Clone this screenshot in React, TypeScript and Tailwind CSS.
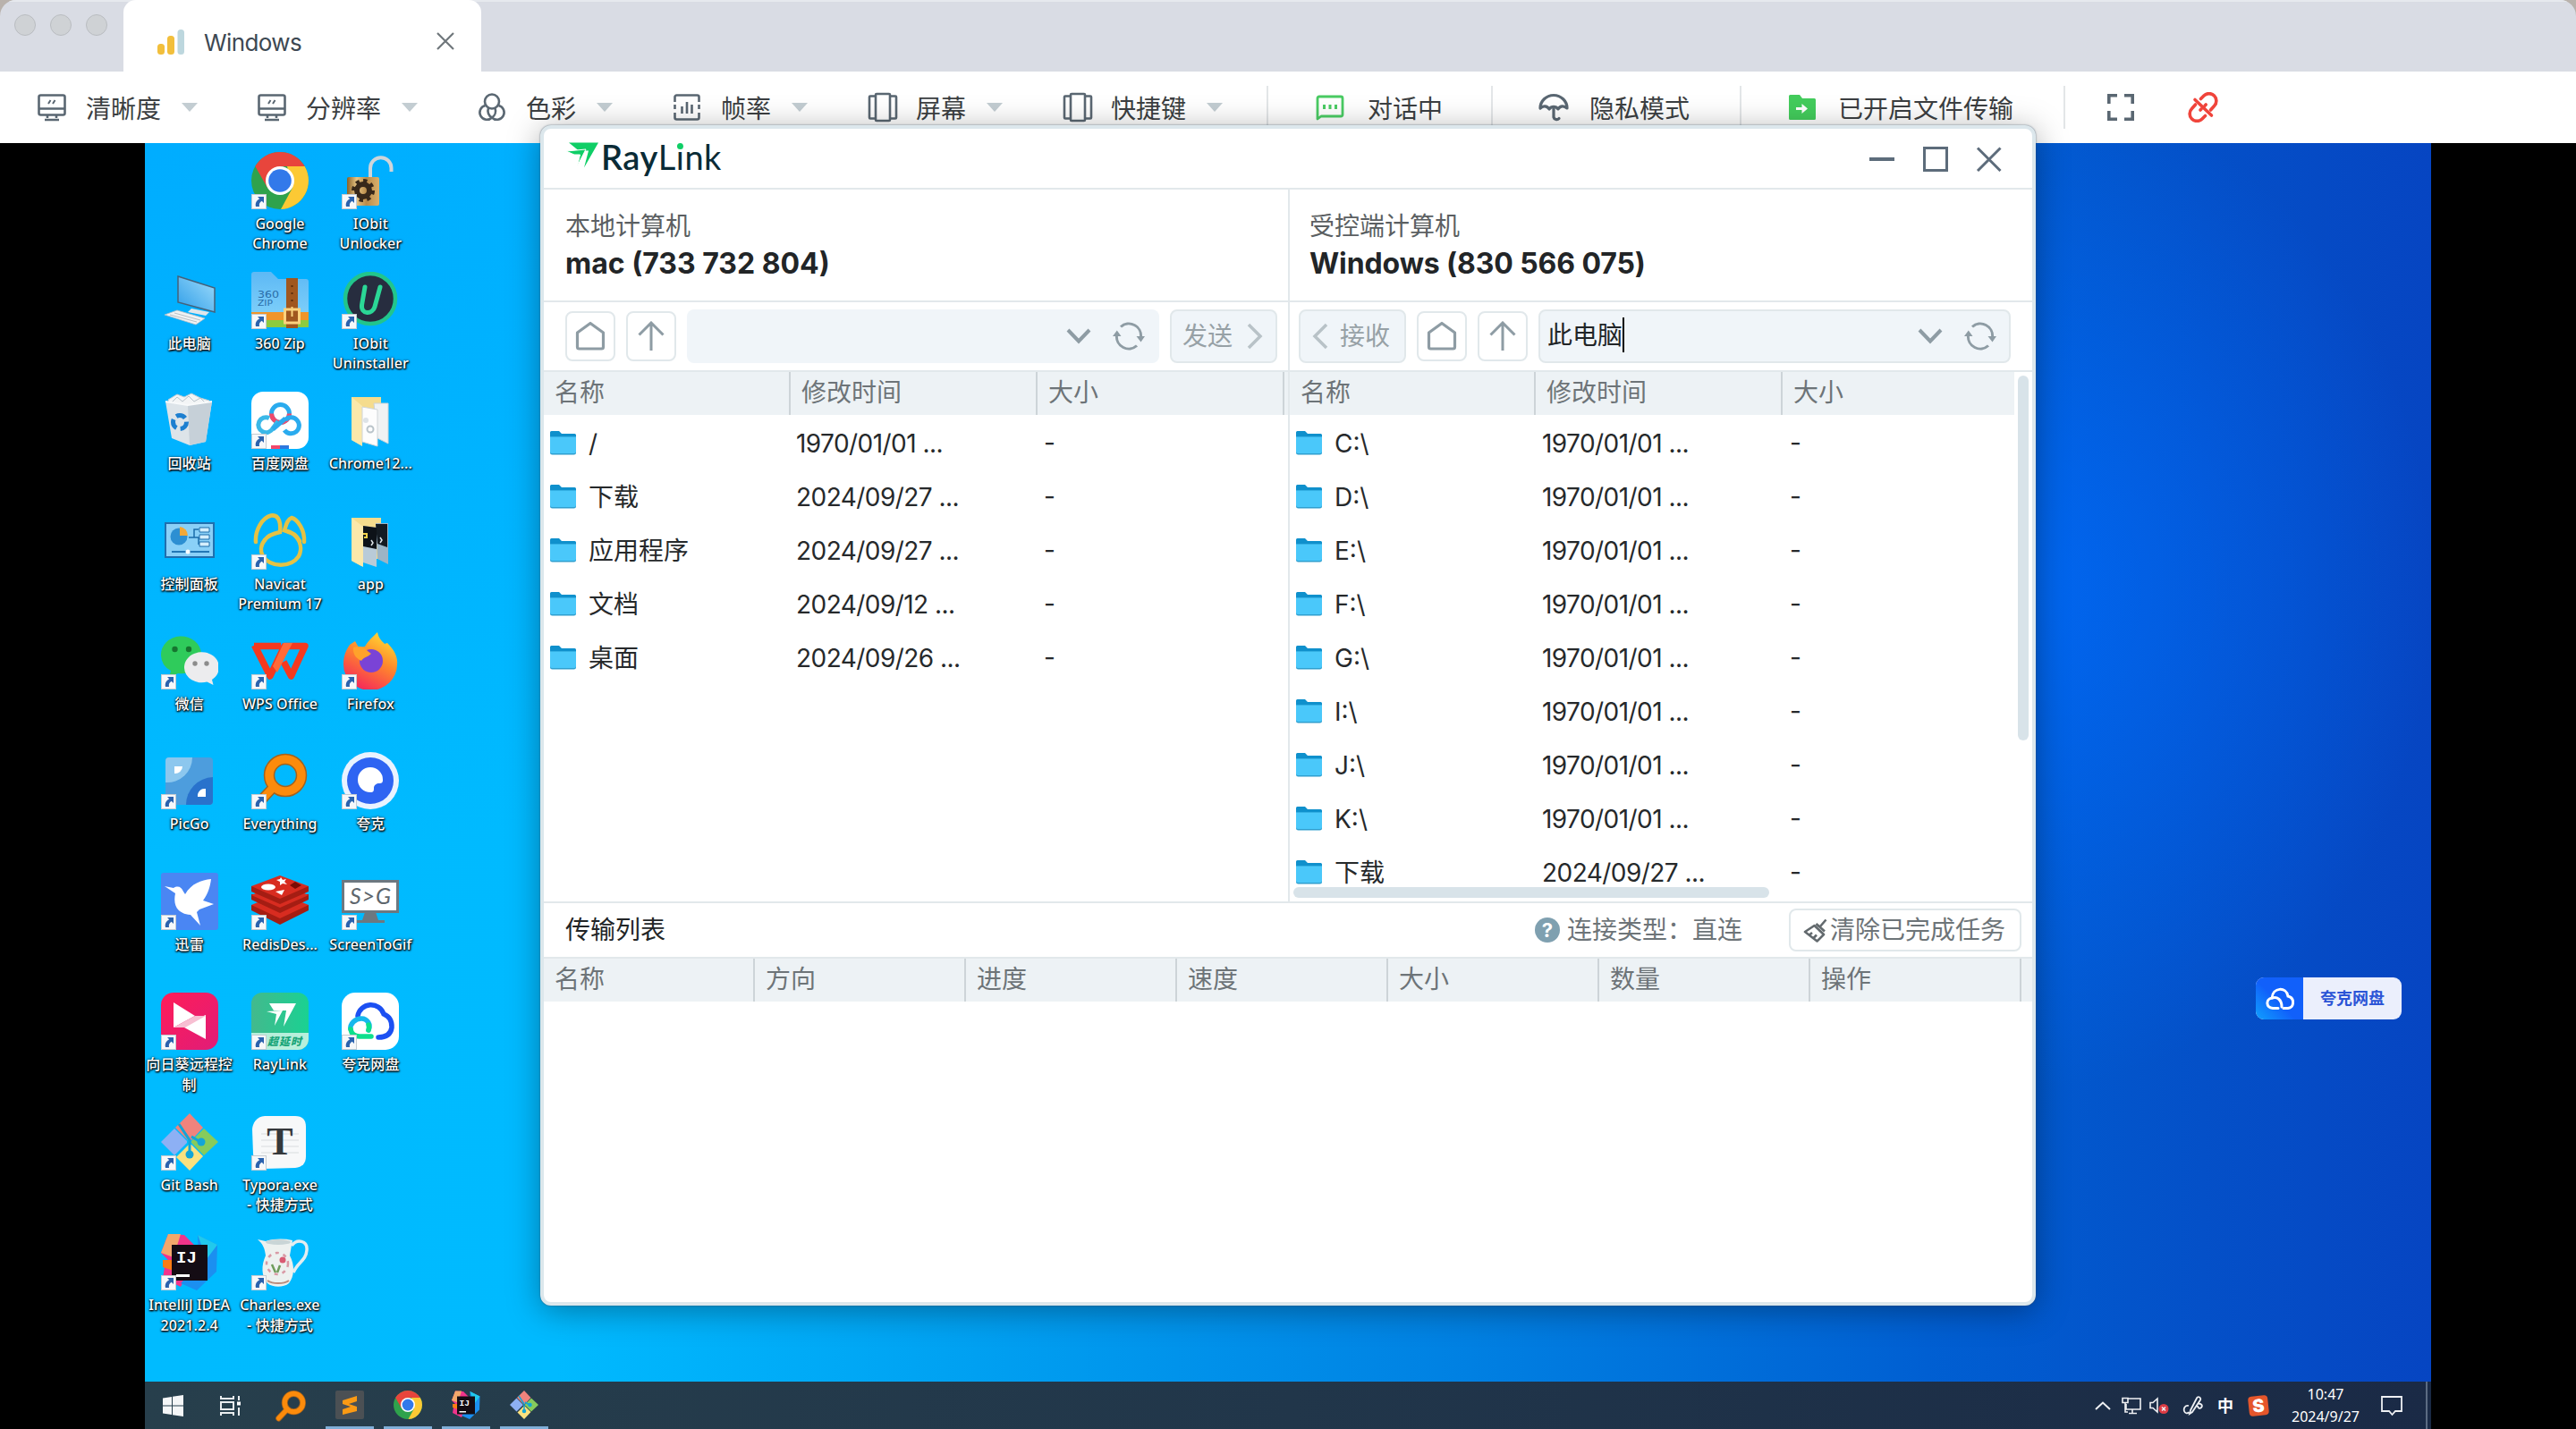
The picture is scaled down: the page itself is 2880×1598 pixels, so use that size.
import React from "react";

type IconProps = { className?: string };

const STROKE = "#5a6772";

/* ---------- toolbar icons ---------- */

const MonitorIcon = () => (
  <svg viewBox="0 0 32 32" className="h-8 w-8" fill="none" stroke={STROKE} strokeWidth="2.6">
    <rect x="1.5" y="2.5" width="29" height="22" rx="2" />
    <path d="M1.5 17.5h29M11 25v3M21 25v3M8 30h16" />
    <path d="M12 12l2.5-4M17 12l2.5-4" strokeWidth="2" />
  </svg>
);
const ColorIcon = () => (
  <svg viewBox="0 0 32 32" className="h-8 w-8" fill="none" stroke={STROKE} strokeWidth="2.6">
    <circle cx="16" cy="9.5" r="8" />
    <path d="M8.6 14A8 8 0 1 0 16 27.5A8.5 8.5 0 0 1 12 17" />
    <path d="M23.400 14A8 8 0 1 1 16 27.500A9 9 0 0 0 19.500 17" />
  </svg>
);
const FrameIcon = () => (
  <svg viewBox="0 0 32 32" className="h-8 w-8" fill="none" stroke={STROKE} strokeWidth="2.6">
    <path d="M2.500 10V4.500a2 2 0 0 1 2-2h23a2 2 0 0 1 2 2V10M2.500 13v5M29.500 13v5M2.500 22v5.500a2 2 0 0 0 2 2h23a2 2 0 0 0 2-2V22" />
    <path d="M10.500 15v8M16 10v13M21.500 13v10" />
  </svg>
);
const ScreensIcon = () => (
  <svg viewBox="0 0 34 34" className="h-[34px] w-[34px]" fill="none" stroke={STROKE} strokeWidth="2.600">
    <rect x="9" y="2" width="16" height="30" rx="1" />
    <path d="M9 4.500H3a1 1 0 0 0-1 1v23a1 1 0 0 0 1 1h6M25 4.500h6a1 1 0 0 1 1 1v23a1 1 0 0 1-1 1h-6" />
  </svg>
);
const ChatIcon = () => (
  <svg viewBox="0 0 32 32" className="h-8 w-8" fill="none" stroke="#4acb63" strokeWidth="2.800">
    <path d="M4 4h24a2 2 0 0 1 2 2v18a2 2 0 0 1-2 2H6l-4 3V6a2 2 0 0 1 2-2z" strokeLinejoin="round" />
    <path d="M9.500 13v5M16 13v5M22.500 13v5" strokeWidth="3" />
  </svg>
);
const UmbrellaIcon = () => (
  <svg viewBox="0 0 34 34" className="h-[34px] w-[34px]" fill="none" stroke={STROKE} strokeWidth="3.200" strokeLinecap="round">
    <path d="M2 18A15 14.500 0 0 1 32 18C28.500 15 24.500 15 22 19C19.500 15.500 14.500 15.500 12 19C9.500 15 5 15 2 18z" strokeLinejoin="round" />
    <path d="M17 17v11a3.500 3.500 0 0 0 6 1.500" />
  </svg>
);
const FolderArrowIcon = () => (
  <svg viewBox="0 0 30 28" className="h-7 w-[30px]">
    <path d="M0 1.500A1.500 1.500 0 0 1 1.500 0H12l3 4h13.500A1.500 1.500 0 0 1 30 5.500v21a1.500 1.500 0 0 1-1.500 1.500h-27A1.500 1.500 0 0 1 0 26.500z" fill="#43cc5c" />
    <path d="M8 14h6.500v-4l6.500 5.500l-6.500 5.500v-4H8z" fill="#fff" />
  </svg>
);
const FullscreenIcon = () => (
  <svg viewBox="0 0 30 30" className="h-[30px] w-[30px]" fill="none" stroke={STROKE} strokeWidth="3.600">
    <path d="M1.800 11V1.800H11M19 1.800h9.200V11M28.200 19v9.200H19M11 28.200H1.800V19" />
  </svg>
);
const UnlinkIcon = () => (
  <svg viewBox="0 0 34 34" className="h-[34px] w-[34px]" fill="none" stroke="#f0443b" strokeWidth="3.600" strokeLinecap="round">
    <path d="M14.500 7.500l3.500-3.500a7.800 7.800 0 0 1 11.500 11.500l-4 4.500" />
    <path d="M19.500 26.500l-3.500 3.500A7.800 7.800 0 0 1 4.500 18.500l4-4.500" />
    <path d="M8 8.500L26.500 26" />
    <path d="M14 20l1.200-1.200M19 15.200l1.200-1.200" />
  </svg>
);

/* ---------- file window icons ---------- */

const RayMark = ({ className }: IconProps) => (
  <svg viewBox="0 0 36 28" className={className}>
    <path d="M3 0H36L20 28L25 9H14z" fill="#0fce66" />
    <path d="M0 9.500L22 7.500L12.500 26L15.500 13.500H9z" fill="#0fce66" stroke="#fff" strokeWidth="1" />
  </svg>
);
const HomeIcon = () => (
  <svg viewBox="0 0 34 34" className="h-[34px] w-[34px]" fill="none" stroke="#8e9ca4" strokeWidth="3.200" strokeLinejoin="round">
    <path d="M17 2.500L31.500 13v16a2 2 0 0 1-2 2h-25a2 2 0 0 1-2-2V13z" />
  </svg>
);
const UpIcon = () => (
  <svg viewBox="0 0 32 34" className="h-[34px] w-8" fill="none" stroke="#8e9ca4" strokeWidth="3">
    <path d="M16 33V3M2.500 15.500L16 2l13.500 13.500" />
  </svg>
);
const DownIcon = () => (
  <svg viewBox="0 0 28 18" className="h-[18px] w-7" fill="none" stroke="#8e9ca4" strokeWidth="4">
    <path d="M2 2l12 12.500L26 2" />
  </svg>
);
const RefreshIcon = () => (
  <svg viewBox="0 0 36 32" className="h-8 w-9" fill="none" stroke="#8e9ca4" strokeWidth="3">
    <path d="M9 5.500A13.500 13.500 0 0 1 31.500 17M27 26.500A13.500 13.500 0 0 1 4.500 15" />
    <path d="M26.500 16h9.500l-4.500 6.500zM0 16h9.500L4.800 9.500z" fill="#8e9ca4" stroke="none" />
  </svg>
);
const FolderIcon = () => (
  <svg viewBox="0 0 29 27" className="h-[27px] w-[29px] shrink-0">
    <path d="M0 1.500A1.500 1.500 0 0 1 1.500 0H10l3 3h14.500A1.500 1.500 0 0 1 29 4.500V12H0z" fill="#0f90cc" />
    <path d="M0 6.500h29V24a2.500 2.500 0 0 1-2.500 2.500h-24A2.500 2.500 0 0 1 0 24z" fill="#2f9fcf" />
    <path d="M0 6.500h29V23a2 2 0 0 1-2 2H2a2 2 0 0 1-2-2z" fill="#4ac8fa" />
  </svg>
);
const BroomIcon = () => (
  <svg viewBox="0 0 28 28" className="h-7 w-7" fill="none" stroke="#636a6e" strokeWidth="2.600" strokeLinejoin="round">
    <path d="M25.500 2.500L19 10M14.500 7L24 15.500M12.500 9L2 16l13.500 10.500L23 19z" />
    <path d="M7 19.500l3-2.500M11.500 23l3.500-3.500" />
  </svg>
);

/* ---------- desktop icons, drawn on a 64x64 box ---------- */

const ChromeArt = ({ className }: IconProps) => (
  <svg viewBox="0 0 64 64" className={className}>
    <circle cx="32" cy="32" r="32" fill="#2fa24c" />
    <path d="M4.300 16A32 32 0 0 1 59.700 16H32L18 40z" fill="#e8453c" />
    <path d="M59.700 16A32 32 0 0 1 33 64L46 40L40 16z" fill="#fcc934" />
    <circle cx="32" cy="32" r="16" fill="#fff" />
    <circle cx="32" cy="32" r="12.800" fill="#3279ea" />
  </svg>
);
const UnlockerArt = () => (
  <svg viewBox="0 0 64 64" className="h-16 w-16">
    <defs>
      <linearGradient id="brass" x1="0" x2="1">
        <stop offset="0" stopColor="#8a6128" /><stop offset=".3" stopColor="#e8c483" />
        <stop offset=".6" stopColor="#b98b4a" /><stop offset="1" stopColor="#d9b06c" />
      </linearGradient>
    </defs>
    <path d="M32 30V18a11.500 11.500 0 0 1 23.500 0v4" fill="none" stroke="#cfd5da" strokeWidth="4" />
    <rect x="6" y="28" width="36" height="32" rx="2" fill="url(#brass)" />
    <circle cx="24" cy="43" r="7" fill="none" stroke="#38281a" strokeWidth="6" />
    <circle cx="24" cy="43" r="11" fill="none" stroke="#38281a" strokeWidth="4" strokeDasharray="4.300 4.300" />
  </svg>
);
const PcArt = () => (
  <svg viewBox="0 0 64 64" className="h-16 w-16">
    <defs>
      <linearGradient id="pcscr" x1="0" y1="1" x2="1" y2="0">
        <stop offset="0" stopColor="#2d9de8" /><stop offset="1" stopColor="#9fdcfb" />
      </linearGradient>
    </defs>
    <path d="M19 5L60 18V45L19 34z" fill="url(#pcscr)" stroke="#45617a" strokeWidth="1.500" />
    <path d="M34 41l20 4-4 4-20-4z" fill="#dfe6ea" />
    <path d="M4 48l14-5 31 9-10 7z" fill="#f0f2f3" stroke="#b7bfc5" strokeWidth=".8" />
    <path d="M10 48l30 8M15 46l29 8" stroke="#b7bfc5" />
  </svg>
);
const ZipArt = () => (
  <svg viewBox="0 0 64 64" className="h-16 w-16">
    <defs>
      <linearGradient id="zipbg" x1="0" y1="0" x2="0" y2="1">
        <stop offset="0" stopColor="#5db9f5" /><stop offset="1" stopColor="#87d5fb" />
      </linearGradient>
    </defs>
    <path d="M0 3a3 3 0 0 1 3-3h19l8 8h31a3 3 0 0 1 3 3v51H0z" fill="url(#zipbg)" />
    <rect y="45" width="64" height="9" fill="#f0952a" />
    <rect y="54" width="64" height="8" fill="#8ccb3f" />
    <rect x="39" y="7" width="13" height="56" fill="#a0571f" />
    <path d="M45.500 15v2M45.500 23v2M45.500 31v2" stroke="#5b2d0c" strokeWidth="2" />
    <rect x="37.500" y="42" width="16" height="15" fill="#a0571f" stroke="#fbd27e" strokeWidth="3" />
    <path d="M45.500 39v11" stroke="#fbd27e" strokeWidth="2" />
    <text x="7" y="28.500" fontSize="10" fontFamily="DejaVu Sans" fill="#2a6da8" textLength="24" lengthAdjust="spacingAndGlyphs">360</text>
    <text x="7" y="37.500" fontSize="9" fontFamily="DejaVu Sans" fill="#2a6da8" textLength="17" lengthAdjust="spacingAndGlyphs">ZIP</text>
  </svg>
);
const UninstallerArt = () => (
  <svg viewBox="0 0 64 64" className="h-16 w-16">
    <circle cx="32" cy="30" r="28" fill="#272d3f" stroke="#22c58c" strokeWidth="4.500" />
    <path d="M26 17l-3.500 20c-1.200 11 12 11 14.500 2L43 17" fill="none" stroke="#2bd796" strokeWidth="5" strokeLinecap="round" />
  </svg>
);
const BinArt = () => (
  <svg viewBox="0 0 64 64" className="h-16 w-16">
    <path d="M8 9l10-6 8 3 8-4 10 5 10 3-4 10H12z" fill="#f3f5f6" stroke="#c3ccd2" />
    <path d="M5 11l25 4 27-4-7 45-18 4-20-8z" fill="#dde4e9" />
    <path d="M30 15l27-4-7 45-18 4z" fill="#c6d0d8" />
    <path d="M12 12l6-6 6 5 7-6 6 6 7-4 6 6" fill="none" stroke="#b9c3ca" />
    <path d="M5 11l25 4 27-4" fill="none" stroke="#f8fafb" strokeWidth="2" />
    <circle cx="21" cy="34" r="7.500" fill="none" stroke="#1d7fd0" strokeWidth="5" strokeDasharray="11 4.500" />
  </svg>
);
const BaiduArt = () => (
  <svg viewBox="0 0 64 64" className="h-16 w-16">
    <rect width="64" height="64" rx="13" fill="#fff" />
    <g fill="none" strokeWidth="5">
      <circle cx="32.500" cy="24.500" r="10" stroke="#2aabee" />
      <path d="M22.500 24.500a10 10 0 0 0 20 0" stroke="#f2496b" />
      <path d="M30 33l-6 8a8.500 8.500 0 1 1-4-11.500" stroke="#3bb8e8" />
      <path d="M24 42l14-12" stroke="#2aabee" />
      <path d="M37 43a9 9 0 1 0 1-11.500" stroke="#2aabee" />
    </g>
    <path d="M22 60h10v4H22z" fill="#f2496b" /><path d="M32 60h10v4H32z" fill="#2f78dd" />
  </svg>
);
const PaperFolderArt = () => (
  <svg viewBox="0 0 64 64" className="h-16 w-16">
    <path d="M11 6h33v46H24l-2 8-11-6z" fill="#f5dc8d" />
    <path d="M11 6l12 10v45l-12-7z" fill="#fbe8aa" />
    <path d="M36 13h16v45l-12-6z" fill="#f0f2f3" stroke="#cdd3d6" />
    <path d="M23 17l17 3v41l-17-5z" fill="#fdfdfd" stroke="#d0d5d8" />
    <circle cx="27" cy="32" r="3" fill="#dde3e7" /><circle cx="32" cy="42" r="3.500" fill="none" stroke="#bac4ca" strokeWidth="2" />
  </svg>
);
const AppFolderArt = () => (
  <svg viewBox="0 0 64 64" className="h-16 w-16">
    <path d="M11 6h33v46H24l-2 8-11-6z" fill="#f5dc8d" />
    <path d="M38 12h14v46l-12-6z" fill="#9cb4c5" /><path d="M38 13h13v26l-11-4z" fill="#141b22" />
    <path d="M24 15l15 2v44l-15-5z" fill="#b9cbd8" /><path d="M24 15l15 2v24l-15-3z" fill="#0d1218" />
    <path d="M24 24h4v4h-3" stroke="#f2d24b" strokeWidth="2" fill="none" />
    <path d="M33 31l2 3-2 3M43 28l2 3-2 3" stroke="#dfe6ea" strokeWidth="1.500" fill="none" />
    <path d="M11 6l13 10v45l-13-7z" fill="#fbe8aa" />
  </svg>
);
const ControlArt = () => (
  <svg viewBox="0 0 64 64" className="h-16 w-16">
    <rect x="5" y="12" width="54" height="38" fill="#8ad0f7" stroke="#1f6fae" strokeWidth="2" />
    <circle cx="20" cy="27" r="9.500" fill="#2d8fd2" />
    <path d="M21 26V16a10 10 0 0 1 9 10z" fill="#f2a838" />
    <path d="M31 28h6v-9h5M37 28h5v8" fill="none" stroke="#1b6cab" strokeWidth="1.500" />
    <path d="M43 17h11v5H43zM43 25h11v5H43zM43 33h11v5H43z" fill="#d5effd" stroke="#1b6cab" />
    <path d="M12 44h42" stroke="#2277b5" strokeWidth="2" /><circle cx="30" cy="44" r="2.500" fill="#fff" />
  </svg>
);
const NavicatArt = () => (
  <svg viewBox="0 0 64 64" className="h-16 w-16" fill="none" stroke="#e5c244" strokeWidth="4.500" strokeLinecap="round">
    <path d="M15 31C10 37 10 44 13 49C22 62 44 62 53 49C57 41 55 32 48 25C44 22 40 22 37 20" />
    <path d="M5 33C4 20 12 6 22 3.500C32 2 33 14 32 22C27 23 19 25 15 31" />
    <path d="M59 33C60 20 52 8 45 6C40 8 39 14 37 20C46 22 51 26 54 32" />
  </svg>
);
const WechatArt = () => (
  <svg viewBox="0 0 64 64" className="h-16 w-16">
    <path d="M0 26a22 20 0 0 1 45-2a22 20 0 0 1-26 22l-10 5 2-8A20 20 0 0 1 0 26z" fill="#2fcb5b" />
    <circle cx="15.500" cy="19" r="3.200" fill="#16762f" /><circle cx="31" cy="19" r="3.200" fill="#16762f" />
    <path d="M26 40a19.500 17 0 1 1 31 13l1.500 6-7-3.500A19.500 17 0 0 1 26 40z" fill="#ececee" />
    <circle cx="38" cy="35" r="2.700" fill="#8c8c8c" /><circle cx="51" cy="35" r="2.700" fill="#8c8c8c" />
  </svg>
);
const WpsArt = () => (
  <svg viewBox="0 0 64 64" className="h-16 w-16">
    <path d="M3 15.500H24L33 15.500M3.500 14.500L21 49L37 15.500H60L44.500 49L36 33" fill="none" stroke="#f5391f" strokeWidth="7.500" strokeLinejoin="round" />
    <path d="M36 12h10L29 45l-5-7z" fill="#ff6a39" />
  </svg>
);
const FirefoxArt = () => (
  <svg viewBox="0 0 64 64" className="h-16 w-16">
    <defs>
      <linearGradient id="fox" x1=".8" y1="0" x2=".3" y2="1">
        <stop offset="0" stopColor="#ffe135" /><stop offset=".45" stopColor="#ff8a2b" /><stop offset="1" stopColor="#f5255c" />
      </linearGradient>
    </defs>
    <path d="M9 14l6-4 4 7 7-1c4-7 9-11 14-16c1 6 4 9 8 13l3-1c8 8 12 16 11 24A30 29 0 0 1 2 36C2 26 5 20 9 14z" fill="url(#fox)" />
    <circle cx="33" cy="32" r="13" fill="#7a43d6" />
    <path d="M13 17c7-2 12-1 16 4l4 3c-4 4-9 4-11 8c-4-2-10-6-9-15z" fill="#ffa22b" />
  </svg>
);
const PicGoArt = () => (
  <svg viewBox="0 0 64 64" className="h-16 w-16">
    <rect x="5" y="6" width="53" height="53" rx="4" fill="#4d9ddd" />
    <path d="M5 32V10a4 4 0 0 1 4-4h26A28 28 0 0 1 5 34z" fill="#8cc7ee" />
    <path d="M58 28v27a4 4 0 0 1-4 4H28A31 31 0 0 1 58 28z" fill="#2972cc" />
    <path d="M15 16h9a8 8 0 0 1-9 8zM50 41v9h-9a8 8 0 0 1 9-9z" fill="#fff" />
  </svg>
);
const EverythingArt = ({ className }: IconProps) => (
  <svg viewBox="0 0 64 64" className={className} fill="none">
    <path d="M24 40L8 57" stroke="#a3611c" strokeWidth="12" strokeLinecap="round" />
    <circle cx="38" cy="26" r="18" stroke="#a3611c" strokeWidth="12.500" />
    <path d="M25 39L8 57" stroke="#fc8b0b" strokeWidth="9" strokeLinecap="round" />
    <circle cx="38" cy="26" r="18" stroke="#fc8b0b" strokeWidth="9.500" />
  </svg>
);
const QuarkArt = () => (
  <svg viewBox="0 0 64 64" className="h-16 w-16">
    <circle cx="32" cy="32" r="32" fill="#e9f3ff" /><circle cx="32" cy="32" r="26" fill="#2e64f2" />
    <path d="M46 31a14 14 0 1 0-14 14c4 0 4-2 4-5s3-5 6-5 4-1 4-4z" fill="#fff" />
  </svg>
);
const ThunderArt = () => (
  <svg viewBox="0 0 64 64" className="h-16 w-16">
    <rect width="64" height="64" rx="3" fill="#4a86f3" />
    <path d="M4 15l10 2c5-3 9-1 11 4l2 3C34 12 45 8 56 7c-1 8-3 16-9 24l12 4-16 6-3 3 4 15L33 47c-14-1-20-10-17-24z" fill="#fff" />
  </svg>
);
const RedisArt = () => (
  <svg viewBox="0 0 64 64" className="h-16 w-16">
    <path d="M0 42l32 16 32-16V36H0z" fill="#a51d13" /><path d="M0 36l32-13 32 13-32 15z" fill="#d82c20" />
    <path d="M0 30l32 15 32-15v-6H0z" fill="#a51d13" /><path d="M0 25l32-13 32 13-32 14z" fill="#d82c20" />
    <path d="M0 21l32 14 32-14v-6H0z" fill="#a51d13" /><path d="M0 15L32 3l32 12-32 14z" fill="#d82c20" />
    <ellipse cx="19" cy="16" rx="8" ry="3.500" fill="#fff" />
    <path d="M33 5l2 3 4-1-2 3 3 3-5-1-3 2v-4l-4-2 4-1zM27 21l10-2-3 6z" fill="#fff" />
    <path d="M49 10l7 4-7 4-6-4z" fill="#7a0c05" />
  </svg>
);
const GifArt = () => (
  <svg viewBox="0 0 64 64" className="h-16 w-16">
    <rect x="1.500" y="9.500" width="61" height="34" fill="#fff" stroke="#6d7880" strokeWidth="3" />
    <path d="M26 44h12l3 9h7v3H16v-3h7z" fill="#6d7880" />
    <text x="9" y="35" fontSize="25" fontStyle="italic" fontFamily="Lato" fill="#5d666c" textLength="46">S&gt;G</text>
  </svg>
);
const SunArt = () => (
  <svg viewBox="0 0 64 64" className="h-16 w-16">
    <defs>
      <linearGradient id="sun" x1="0" x2="1" y2="1"><stop offset="0" stopColor="#ff1d58" /><stop offset="1" stopColor="#e01c78" /></linearGradient>
    </defs>
    <rect width="64" height="64" rx="14" fill="url(#sun)" />
    <path d="M14 11l24 15L14 39z" fill="#fff" /><path d="M14 39l36-14v27L26 39z" fill="#fff" />
    <path d="M14 39l24-13h12L27 39z" fill="#f7bfd2" />
  </svg>
);
const RayArt = () => (
  <svg viewBox="0 0 64 64" className="h-16 w-16">
    <defs>
      <clipPath id="rayclip"><rect width="64" height="64" rx="12" /></clipPath>
      <linearGradient id="raybg" x1="0" x2="1"><stop offset="0" stopColor="#43b98d" /><stop offset="1" stopColor="#1ad192" /></linearGradient>
    </defs>
    <g clipPath="url(#rayclip)">
      <rect width="64" height="64" fill="url(#raybg)" />
      <path d="M0 45h64v19H0z" fill="#b7efdb" />
      <text x="18" y="59" fontSize="12" fontWeight="900" fontStyle="italic" fontFamily="Noto Sans CJK SC" fill="#17a578" textLength="38">超延时</text>
    </g>
    <path d="M20 12h30L36 38l3-18H25z" fill="#fff" /><path d="M17 21l18-1-9 17 2-13z" fill="#fff" />
  </svg>
);
const QuarkCloud = ({ className }: IconProps) => (
  <svg viewBox="0 0 64 64" className={className}>
    <rect width="64" height="64" rx="15" fill="#fff" />
    <g fill="none" strokeWidth="5.500" strokeLinecap="round">
      <path d="M18 26a15 15 0 0 1 29-2c10 4 9 14 9 15c-1 7-6 11-15 11" stroke="#1c50f2" />
      <path d="M30 42c3-6-1-13-8-13s-13 6-12 12" stroke="#16b8ec" />
      <path d="M10 41c1 6 5 8 10 8h13M30 42a9 9 0 0 0 0-6" stroke="#0ce08c" />
    </g>
  </svg>
);
const GitArt = ({ className }: IconProps) => (
  <svg viewBox="0 0 64 64" className={className}>
    <path d="M32 0L16 16l14 14h4l13-14z" fill="#f0837d" />
    <path d="M15 17L0 32l15 15 14-14v-2z" fill="#8db0f4" />
    <path d="M48 17l16 15-16 15-14-14v-2z" fill="#86cb5c" />
    <path d="M32 64L17 49l14-14h3l13 13z" fill="#fbe17f" />
    <path d="M20 12l12 18v15M34 26l10 6" fill="none" stroke="#12a5d8" strokeWidth="3" />
    <circle cx="32" cy="46" r="4.500" fill="#12a5d8" /><circle cx="45" cy="32" r="4.500" fill="#12a5d8" />
  </svg>
);
const TyporaArt = () => (
  <svg viewBox="0 0 64 64" className="h-16 w-16">
    <path d="M1 18C1 12 6 3 15 3h34c8 0 12 4 12 12v33c0 8-4 12-12 13l-35 1C5 61 3 55 2 45z" fill="#f7f8f9" />
    <path d="M11 23h42M11 30h42M11 37h42M11 44h42" stroke="#d9dcde" />
    <text x="32" y="46" fontSize="44" fontWeight="700" textAnchor="middle" fontFamily="Liberation Serif" fill="#35383b">T</text>
  </svg>
);
const IdeaArt = ({ className }: IconProps) => (
  <svg viewBox="0 0 64 64" className={className}>
    <path d="M8 1l18 1 14 14-8 26-10 18-20-10L4 38l6-6L0 22z" fill="#f1348b" />
    <path d="M8 1l14 0-8 26-14-5z" fill="#f2a86b" /><path d="M2 30l12 0v12L2 38z" fill="#fb7c14" />
    <path d="M41 2l22 11-1 30-22 21-18-8 20-20z" fill="#1b8ff0" /><path d="M41 2l22 11-12 16z" fill="#21c9ec" />
    <rect x="12" y="13" width="40" height="40" fill="#140c14" />
    <path d="M17 46h15v3H17z" fill="#fff" />
    <text x="17" y="33" fontSize="19" fontWeight="700" fontFamily="Liberation Mono" fill="#fff">IJ</text>
  </svg>
);
const JugArt = () => (
  <svg viewBox="0 0 64 64" className="h-16 w-16">
    <path d="M45 14c6-8 18-6 17 5c-1 12-10 13-15 25" fill="none" stroke="#e3edf0" strokeWidth="3.500" />
    <path d="M7 7l9 2c10-3 20-3 30-1l-3 17c6 11 5 24-1 31c-6 5-18 5-24 0c-7-8-7-20-2-31c-1-8-3-13-9-18z" fill="#edf1ef" />
    <ellipse cx="30" cy="10" rx="14" ry="3" fill="#c9d5d6" />
    <circle cx="29" cy="34" r="12" fill="none" stroke="#d99aa5" strokeWidth="2.500" strokeDasharray="4 5" />
    <circle cx="35" cy="30" r="3.500" fill="#d95b73" /><path d="M23 35l4 9M32 36l-3 8" stroke="#6e9c5b" strokeWidth="2.500" />
    <path d="M18 53c6 4 18 4 24 0" stroke="#b98b7c" strokeWidth="2" fill="none" />
  </svg>
);

const ShortcutBadge = () => (
  <svg viewBox="0 0 17 17" className="absolute bottom-0 left-0 h-[17px] w-[17px]">
    <rect x=".5" y=".5" width="16" height="16" fill="#f6f8fa" stroke="#c5ccd2" />
    <path d="M7 3h7v7l-2.300-2.300C9 9.500 8.500 11 9 14H5c-1-4 1-7 4.200-8.800z" fill="#2b62ae" />
  </svg>
);

type DesktopItem = { label: string[]; art: React.ReactNode; shortcut?: boolean } | null;

const desktopItems: DesktopItem[] = [
  null,
  { label: ["Google", "Chrome"], art: <ChromeArt className="h-16 w-16" />, shortcut: true },
  { label: ["IObit", "Unlocker"], art: <UnlockerArt />, shortcut: true },
  { label: ["此电脑"], art: <PcArt /> },
  { label: ["360 Zip"], art: <ZipArt />, shortcut: true },
  { label: ["IObit", "Uninstaller"], art: <UninstallerArt />, shortcut: true },
  { label: ["回收站"], art: <BinArt /> },
  { label: ["百度网盘"], art: <BaiduArt />, shortcut: true },
  { label: ["Chrome12..."], art: <PaperFolderArt /> },
  { label: ["控制面板"], art: <ControlArt /> },
  { label: ["Navicat", "Premium 17"], art: <NavicatArt />, shortcut: true },
  { label: ["app"], art: <AppFolderArt /> },
  { label: ["微信"], art: <WechatArt />, shortcut: true },
  { label: ["WPS Office"], art: <WpsArt />, shortcut: true },
  { label: ["Firefox"], art: <FirefoxArt />, shortcut: true },
  { label: ["PicGo"], art: <PicGoArt />, shortcut: true },
  { label: ["Everything"], art: <EverythingArt className="h-16 w-16" />, shortcut: true },
  { label: ["夸克"], art: <QuarkArt />, shortcut: true },
  { label: ["迅雷"], art: <ThunderArt />, shortcut: true },
  { label: ["RedisDes..."], art: <RedisArt />, shortcut: true },
  { label: ["ScreenToGif"], art: <GifArt />, shortcut: true },
  { label: ["向日葵远程控", "制"], art: <SunArt />, shortcut: true },
  { label: ["RayLink"], art: <RayArt />, shortcut: true },
  { label: ["夸克网盘"], art: <QuarkCloud className="h-16 w-16" />, shortcut: true },
  { label: ["Git Bash"], art: <GitArt className="h-16 w-16" />, shortcut: true },
  { label: ["Typora.exe", "- 快捷方式"], art: <TyporaArt />, shortcut: true },
  null,
  { label: ["IntelliJ IDEA", "2021.2.4"], art: <IdeaArt className="h-16 w-16" />, shortcut: true },
  { label: ["Charles.exe", "- 快捷方式"], art: <JugArt />, shortcut: true },
];

function DesktopIcons() {
  return (
    <div className="-ml-px grid w-[304px] auto-rows-[134.4px] grid-cols-3 pt-[9.5px]">
      {desktopItems.map((item, i) =>
        item ? (
          <div key={i} className="flex flex-col items-center">
            <div className="relative h-16 w-16">
              {item.art}
              {item.shortcut && <ShortcutBadge />}
            </div>
            <div className="mt-[5px] text-center font-['Noto_Sans','Noto_Sans_CJK_SC',sans-serif] text-[16px] leading-[22.6px] font-medium tracking-[0.1px] whitespace-nowrap text-white [text-shadow:0_1px_2px_#000,1px_1px_2px_#000,0_0_3px_rgba(0,0,0,0.6)]">
              {item.label.map((line) => (
                <div key={line}>{line}</div>
              ))}
            </div>
          </div>
        ) : (
          <div key={i} />
        ),
      )}
    </div>
  );
}

/* ---------- session toolbar ---------- */

function MenuItem({ icon, label, wide }: { icon: React.ReactNode; label: string; wide?: boolean }) {
  return (
    <div className={wide ? "flex w-[246px] items-center" : "flex w-[218px] items-center"}>
      <span className="w-[54px]">{icon}</span>
      <span className="pt-[3px]">{label}</span>
      <span className="ml-[23px] h-0 w-0 border-x-[9px] border-t-[10px] border-x-transparent border-t-[#c3cdd2]" />
    </div>
  );
}
const Divider = () => <span className="h-12 w-[2px] bg-[#e3e6e8]" />;

function SessionToolbar() {
  return (
    <div className="flex h-20 items-center bg-white pl-[42px] text-[28px] leading-none text-[#3c3f42]">
      <MenuItem wide icon={<MonitorIcon />} label="清晰度" />
      <MenuItem wide icon={<MonitorIcon />} label="分辨率" />
      <MenuItem icon={<ColorIcon />} label="色彩" />
      <MenuItem icon={<FrameIcon />} label="帧率" />
      <MenuItem icon={<ScreensIcon />} label="屏幕" />
      <MenuItem wide icon={<ScreensIcon />} label="快捷键" />
      <div className="-ml-[18px] flex items-center">
        <Divider />
        <span className="ml-[53px] w-[58px]"><ChatIcon /></span>
        <span className="w-[138px] pt-[3px]">对话中</span>
        <Divider />
        <span className="ml-[51px] w-[57px]"><UmbrellaIcon /></span>
        <span className="w-[168px] pt-[3px]">隐私模式</span>
        <Divider />
        <span className="ml-[53px] w-[55px]"><FolderArrowIcon /></span>
        <span className="w-[252px] pt-[3px]">已开启文件传输</span>
        <Divider />
        <span className="ml-[47px] w-[90px]"><FullscreenIcon /></span>
        <UnlinkIcon />
      </div>
    </div>
  );
}

/* ---------- file transfer window ---------- */

type FileRow = { name: string; date: string };
const localFiles: FileRow[] = [
  { name: "/", date: "1970/01/01 ..." },
  { name: "下载", date: "2024/09/27 ..." },
  { name: "应用程序", date: "2024/09/27 ..." },
  { name: "文档", date: "2024/09/12 ..." },
  { name: "桌面", date: "2024/09/26 ..." },
];
const remoteFiles: FileRow[] = [
  ...["C:\\", "D:\\", "E:\\", "F:\\", "G:\\", "I:\\", "J:\\", "K:\\"].map((name) => ({ name, date: "1970/01/01 ..." })),
  { name: "下载", date: "2024/09/27 ..." },
];

const SquareButton = ({ children }: { children: React.ReactNode }) => (
  <span className="flex h-14 w-14 shrink-0 items-center justify-center rounded-lg border-2 border-[#e1e8eb] bg-white">{children}</span>
);

const HeaderCell = ({ children, className }: { children: React.ReactNode; className: string }) => (
  <div className={`flex h-full shrink-0 items-center pb-[3px] pl-[12px] ${className}`}>{children}</div>
);

function FileTable({ rows, remote }: { rows: FileRow[]; remote?: boolean }) {
  return (
    <div className="min-w-0 grow">
      <div className="mb-[1px] flex h-12 items-center bg-[#edf2f5] text-[#6d7478]">
        <HeaderCell className={remote ? "w-[275px] border-r-2 border-[#cdd4d8]" : "w-[276px] border-r-2 border-[#cdd4d8]"}>名称</HeaderCell>
        <HeaderCell className="w-[276px] border-r-2 border-[#cdd4d8]">修改时间</HeaderCell>
        <HeaderCell className={remote ? "w-[250px]" : "w-[276px] border-r-2 border-[#cdd4d8]"}>大小</HeaderCell>
      </div>
      {rows.map((row) => (
        <div key={row.name} className="flex h-[60px] items-center pl-[7px] text-[#26292b]">
          <FolderIcon />
          <span className={remote ? "w-[246px] pt-[1px] pl-[14px]" : "w-[246px] pt-[1px] pl-[14px]"}>{row.name}</span>
          <span className="w-[277px] pt-[1px] tracking-[-0.55px]">{row.date}</span>
          <span>-</span>
        </div>
      ))}
    </div>
  );
}

function Logo() {
  return (
    <div className="flex items-start text-[#0a2b36]">
      <RayMark className="mt-[3px] h-[29px] w-9" />
      <span className="ml-[3px] flex font-['Lato',sans-serif] text-[38px] leading-[38px] tracking-[0.5px]">
        <span className="font-semibold">Ray</span>
        <span>L</span>
        <span className="relative">
          i<i className="absolute top-[4px] left-[1px] h-[7px] w-[7px] rounded-full bg-[#0fce66]" />
        </span>
        <span>nk</span>
      </span>
    </div>
  );
}

const transferColumns = ["名称", "方向", "进度", "速度", "大小", "数量", "操作"];

function TransferWindow() {
  return (
    <div className="absolute top-[140px] left-[604px] flex h-[1320px] w-[1672px] flex-col overflow-hidden rounded-[12px] border-4 border-[#dce7ec] bg-white text-[28px] leading-none shadow-[0_0_2px_rgba(60,80,100,0.8),0_6px_36px_rgba(0,0,0,0.35)]">
      <div className="flex h-[68px] shrink-0 items-center border-b-2 border-[#e2e8eb] pl-[25px]">
        <div className="mb-[5px] grow"><Logo /></div>
        <svg viewBox="0 0 148 28" className="mb-[-1px] h-7 w-[148px]" fill="none" stroke="#5d6c7b">
          <path d="M0 14h28" strokeWidth="4" />
          <rect x="61.500" y="1.500" width="25" height="25" strokeWidth="3" />
          <path d="M121 1.500l25.500 25.500M146.500 1.500L121 27" strokeWidth="3" />
        </svg>
        <span className="w-[34px]" />
      </div>

      <div className="flex h-[798px] shrink-0 border-b-2 border-[#e2e8eb]">
        <div className="flex w-[834px] shrink-0 flex-col border-r-2 border-[#e2e8eb]">
          <div className="flex h-[126px] shrink-0 flex-col border-b-2 border-[#e2e8eb] pt-[27px] pl-[24px]">
            <span className="text-[#5b5f62]">本地计算机</span>
            <span className="mt-[12px] text-[32px] font-bold text-[#222527]">mac (733 732 804)</span>
          </div>
          <div className="flex h-[78px] shrink-0 items-center gap-3 border-b-2 border-[#e2e8eb] pl-6">
            <SquareButton><HomeIcon /></SquareButton>
            <SquareButton><UpIcon /></SquareButton>
            <div className="flex h-[60px] w-[528px] items-center justify-end gap-6 rounded-lg bg-[#f0f5f9] pr-4">
              <DownIcon /><RefreshIcon />
            </div>
            <div className="flex h-[60px] w-[120px] items-center gap-[16px] rounded-lg border-2 border-[#e1e8eb] bg-[#f0f5f9] pl-[12px] text-[#97a1a6]">
              发送
              <svg viewBox="0 0 18 30" className="h-[30px] w-[18px]" fill="none" stroke="#b8c2c7" strokeWidth="3.500"><path d="M2 2l13 13L2 28" /></svg>
            </div>
          </div>
          <FileTable rows={localFiles} />
        </div>

        <div className="relative flex w-[830px] flex-col">
          <div className="flex h-[126px] shrink-0 flex-col border-b-2 border-[#e2e8eb] pt-[27px] pl-[22px]">
            <span className="text-[#5b5f62]">受控端计算机</span>
            <span className="mt-[12px] text-[32px] font-bold tracking-[-0.1px] text-[#222527]">Windows (830 566 075)</span>
          </div>
          <div className="flex h-[78px] shrink-0 items-center gap-3 border-b-2 border-[#e2e8eb] pl-[10px]">
            <div className="flex h-[60px] w-[120px] items-center gap-[13px] rounded-lg border-2 border-[#e1e8eb] bg-[#f0f5f9] pl-[13px] text-[#97a1a6]">
              <svg viewBox="0 0 18 30" className="h-[30px] w-[18px]" fill="none" stroke="#b8c2c7" strokeWidth="3.500"><path d="M16 2L3 15l13 13" /></svg>
              接收
            </div>
            <SquareButton><HomeIcon /></SquareButton>
            <SquareButton><UpIcon /></SquareButton>
            <div className="flex h-[60px] w-[528px] items-center rounded-lg border-2 border-[#e1e8eb] bg-[#f0f5f9] pr-3.5 pl-2 text-[#222527]">
              <span className="flex grow items-center pb-[3px]">此电脑<i className="h-[39px] w-[2px] bg-black" /></span>
              <span className="flex items-center gap-6"><DownIcon /><RefreshIcon /></span>
            </div>
          </div>
          <div className="flex min-h-0 grow overflow-hidden">
            <FileTable rows={remoteFiles} remote />
            <div className="w-5 shrink-0 bg-white pt-1 pl-1">
              <div className="h-[408px] w-3 rounded-full bg-[#d8e3e9]" />
            </div>
          </div>
          <div className="absolute bottom-[4px] left-[4px] h-3 w-[532px] rounded-full bg-[#d8e3e9]" />
        </div>
      </div>

      <div className="flex h-[62px] shrink-0 items-center border-b-2 border-[#e2e8eb] pl-[24px] text-[#6d7478]">
        <span className="grow text-[#222527]">传输列表</span>
        <span className="flex h-7 w-7 items-center justify-center rounded-full bg-[#7fa0b0] text-[22px] font-bold text-white">?</span>
        <span className="ml-[8px]">连接类型：直连</span>
        <span className="mr-[12px] ml-[52px] flex h-12 w-[260px] items-center gap-[2px] rounded-lg border-2 border-[#e1e8eb] pl-[14px]">
          <BroomIcon />清除已完成任务
        </span>
      </div>
      <div className="flex h-12 shrink-0 bg-[#edf2f5] text-[#6d7478]">
        {transferColumns.map((c) => (
          <HeaderCell key={c} className="w-[236px] border-r-2 border-[#cdd4d8]">{c}</HeaderCell>
        ))}
      </div>
    </div>
  );
}

/* ---------- taskbar ---------- */

function TaskbarApp({ children }: { children: React.ReactNode }) {
  return (
    <div className="mr-[11px] flex h-full w-[54px] items-center justify-center border-b-[3px] border-[#80afd8] pt-[1px]">{children}</div>
  );
}

function Taskbar() {
  return (
    <div className="flex h-[53px] w-full items-center bg-linear-to-r from-[#273f4c] via-[#21364a] to-[#1a2a46] font-['Noto_Sans','Noto_Sans_CJK_SC',sans-serif] text-white">
      <svg viewBox="0 0 24 24" className="ml-5 h-6 w-6" fill="#f4f6f7">
        <path d="M0 3.500l10-1.500v9.500H0zM11 1.800L23 0v11.500H11zM0 12.500h10V22L0 20.500zM11 12.500h12V24l-12-1.800z" />
      </svg>
      <svg viewBox="0 0 24 24" className="ml-[40px] h-6 w-6" fill="none" stroke="#e9edef" strokeWidth="2">
        <path d="M1 1v3h14V1M1 23v-3h14v3M1 8h14v8H1zM21 1v5M21 14v9" /><path d="M19 7.500h4v4h-4z" fill="#fff" stroke="none" />
      </svg>
      <EverythingArt className="ml-[37px] h-9 w-9" />
      <div className="ml-[21px] flex h-full">
        <TaskbarApp>
          <svg viewBox="0 0 32 32" className="h-8 w-8"><rect width="32" height="32" rx="2" fill="#4b5054" /><path d="M8 11l16-5v6l-9 3 9 3v5L8 27v-6l9-3-9-3z" fill="#fb9a14" /></svg>
        </TaskbarApp>
        <TaskbarApp><ChromeArt className="h-8 w-8" /></TaskbarApp>
        <TaskbarApp><IdeaArt className="h-8 w-8" /></TaskbarApp>
        <TaskbarApp><GitArt className="h-8 w-8" /></TaskbarApp>
      </div>
      <span className="grow" />
      <svg viewBox="0 0 18 10" className="mr-[12px] h-[10px] w-[18px]" fill="none" stroke="#eef0f3" strokeWidth="2"><path d="M1 9l8-7.500L17 9" /></svg>
      <svg viewBox="0 0 22 20" className="mr-[9px] h-5 w-[22px]" fill="none" stroke="#eef0f3" strokeWidth="1.600">
        <path d="M7 2h14v12H5V8M12 14v4M8 18.500h9M1 1.500h6v5H1zM4 7v10h3" />
      </svg>
      <svg viewBox="0 0 22 20" className="mr-[15px] h-5 w-[22px]" fill="none" stroke="#eef0f3" strokeWidth="1.600">
        <path d="M1 6.500h3l5-4.500v15l-5-4.500H1z" /><circle cx="16" cy="13.500" r="5.500" fill="#dd3c45" stroke="none" /><path d="M14 11.500l4 4M18 11.500l-4 4" />
      </svg>
      <svg viewBox="0 0 24 22" className="mr-[15px] h-[22px] w-6" fill="none" stroke="#eef0f3" strokeWidth="1.800">
        <path d="M9 16L16 2.500a2.200 2.200 0 0 1 4 2L11 18l-3 2zM7 11c-4-1-6 3-5 6s4 3 5 1M18 9c3-1 5 2 3 4s-4 0-4-2" />
      </svg>
      <span className="mr-[17px] text-[18px] leading-none font-bold">中</span>
      <span className="flex h-[22px] w-[22px] -rotate-6 items-center justify-center rounded-[4px] bg-[#e5562b] font-['Inter',sans-serif] text-[20px] leading-none font-black">S</span>
      <div className="ml-[20px] w-[88px] text-center text-[16px] leading-[25px]">
        <div>10:47</div>
        <div>2024/9/27</div>
      </div>
      <svg viewBox="0 0 24 24" className="ml-[18px] h-6 w-6" fill="none" stroke="#eef0f3" strokeWidth="1.800"><path d="M1 2h22v16h-7l-3.500 4L9 18H1z" /></svg>
      <span className="mr-[4px] ml-[26px] h-full w-[2px] bg-[#5b6b82]" />
    </div>
  );
}

export default function App() {
  return (
    <div className="relative h-[1598px] w-[2880px] overflow-hidden bg-[#b9b2ac] font-['Inter','Noto_Sans_CJK_SC',sans-serif]">
      <div className="flex h-full flex-col overflow-hidden rounded-t-[18px]">
        <div className="flex h-20 shrink-0 border-t-2 border-[#e6e9ee] bg-[#d9dce4]">
          <div className="flex w-[138px] gap-4 pt-[14px] pl-4">
            <i className="h-6 w-6 rounded-full border border-[#b9bcc0] bg-[#cfd2d5]" />
            <i className="h-6 w-6 rounded-full border border-[#b9bcc0] bg-[#cfd2d5]" />
            <i className="h-6 w-6 rounded-full border border-[#b9bcc0] bg-[#cfd2d5]" />
          </div>
          <div className="-mt-[2px] flex w-[400px] items-center rounded-t-[14px] bg-white pt-[14px] pl-[38px]">
            <svg viewBox="0 0 30 28" className="h-7 w-[30px]">
              <rect y="16" width="8" height="12" rx="3.500" fill="#f2bf3c" />
              <rect x="11" y="7" width="8" height="21" rx="3.500" fill="#f2bf3c" />
              <rect x="22.500" width="7.500" height="28" rx="3.500" fill="#bdd7de" />
            </svg>
            <span className="ml-[22px] grow text-[26px] tracking-[-0.6px] text-[#3d4852]">Windows</span>
            <svg viewBox="0 0 20 20" className="mr-[30px] mb-[2px] h-5 w-5" fill="none" stroke="#6f767b" strokeWidth="2.200"><path d="M1 1l18 18M19 1L1 19" /></svg>
          </div>
        </div>
        <SessionToolbar />
        <div className="flex min-h-0 grow justify-center bg-black">
          <div className="flex w-[2556px] flex-col bg-[radial-gradient(ellipse_460px_560px_at_2100px_500px,rgba(0,108,255,0.7),rgba(0,108,255,0)),linear-gradient(90deg,#00bbff_0%,#00baff_18%,#00a2f2_35%,#0080e2_58%,#005fd2_78%,#0450c8_90%,#0645c2_100%)]">
            <div className="flex min-h-0 grow items-start justify-between bg-[radial-gradient(ellipse_1500px_800px_at_0px_0px,rgba(0,140,255,0.3),rgba(0,140,255,0))]">
              <DesktopIcons />
              <div className="mt-[933px] mr-[33px] flex h-[47px] w-[163px] overflow-hidden rounded-[9px] bg-[#ebeffc]">
                <span className="flex w-[53px] items-center justify-center bg-[linear-gradient(45deg,#0fa0ff,#1160fa_45%)]">
                  <svg viewBox="0 0 32 26" className="h-[26px] w-8" fill="none" stroke="#fff" strokeWidth="3" strokeLinecap="round">
                    <path d="M14 23.500H8C0 23 0 13 7 12C8 0 23-1 25 10C33 12 32 23 25 23.500h-5" /><path d="M7 12c6-2 11 2 11 10" />
                  </svg>
                </span>
                <span className="flex grow items-center justify-center text-[18px] font-bold text-[#2b54d6]">夸克网盘</span>
              </div>
            </div>
            <Taskbar />
          </div>
        </div>
      </div>
      <TransferWindow />
    </div>
  );
}
